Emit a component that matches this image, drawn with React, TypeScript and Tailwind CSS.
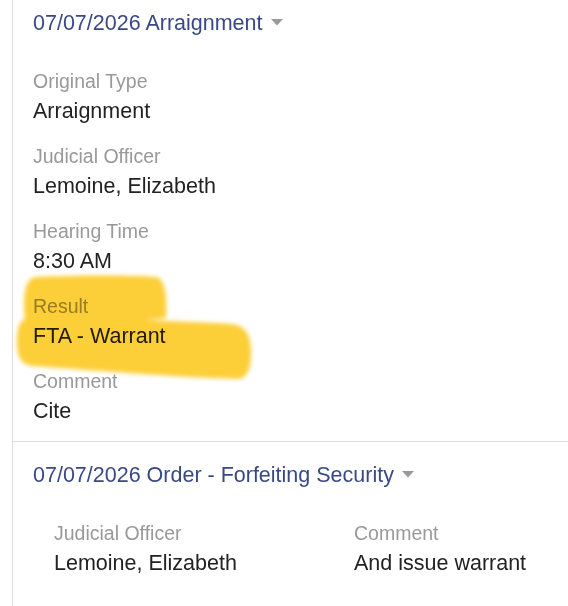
import React from "react";

const Caret = () => (
  <svg width="12" height="7" viewBox="0 0 12 7" className="ml-[8px] inline-block align-middle relative top-[-2px]">
    <polygon points="0,0 12,0 6,6.5" fill="#999999" />
  </svg>
);

const Label = ({ children }: { children: React.ReactNode }) => (
  <div className="text-[19.5px] leading-[22px] text-[#999999]">{children}</div>
);

const Value = ({ children }: { children: React.ReactNode }) => (
  <div className="mt-[7px] text-[21.5px] leading-[24px] text-[#222222]">{children}</div>
);

const Field = ({ label, value, first }: { label: string; value: string; first?: boolean }) => (
  <div className={first ? "" : "mt-[22px]"}>
    <Label>{label}</Label>
    <Value>{value}</Value>
  </div>
);

export default function App() {
  return (
    <div
      className="relative w-[568px] h-[606px] bg-white overflow-hidden"
      style={{ fontFamily: '"Liberation Sans", Arial, sans-serif' }}
    >
      <div className="ml-[12px] h-full border-l border-[#dddddd]">
        <section className="pl-[20px] pt-[11px] pb-[18px] border-b border-[#dddddd]">
          <h2 className="text-[21.5px] leading-[24px] text-[#3a4886] font-normal">
            07/07/2026 Arraignment
            <Caret />
          </h2>
          <div className="mt-[35px]">
            <Field first label="Original Type" value="Arraignment" />
            <Field label="Judicial Officer" value="Lemoine, Elizabeth" />
            <Field label="Hearing Time" value="8:30 AM" />
            <Field label="Result" value="FTA - Warrant" />
            <Field label="Comment" value="Cite" />
          </div>
        </section>
        <section className="pl-[20px] pt-[21px]">
          <h2 className="text-[21.5px] leading-[24px] text-[#3a4886] font-normal">
            07/07/2026 Order - Forfeiting Security
            <Caret />
          </h2>
          <div className="mt-[35px] pl-[21px] grid grid-cols-[300px_1fr]">
            <Field first label="Judicial Officer" value="Lemoine, Elizabeth" />
            <Field first label="Comment" value="And issue warrant" />
          </div>
        </section>
      </div>
      <svg
        className="absolute left-0 top-0 pointer-events-none mix-blend-multiply"
        width="568"
        height="606"
        viewBox="0 0 568 606"
      >
        <defs>
          <filter id="soft" filterUnits="userSpaceOnUse" x="0" y="240" width="300" height="180">
            <feGaussianBlur stdDeviation="2.2" />
          </filter>
        </defs>
        <g filter="url(#soft)" fill="#fccf38" stroke="none">
          <path d="M36 277 C80 275 130 275 156 277 C166 279 167 300 166 318 L40 330 C28 330 24 322 24 308 C24 288 27 278 36 277 Z" />
          <path d="M30 318 C90 318 160 320 232 324 C248 326 251 338 251 352 C251 368 248 378 238 379 C170 377 90 370 32 366 C20 364 17 356 17 342 C17 326 20 318 30 318 Z" />
        </g>
      </svg>
    </div>
  );
}
